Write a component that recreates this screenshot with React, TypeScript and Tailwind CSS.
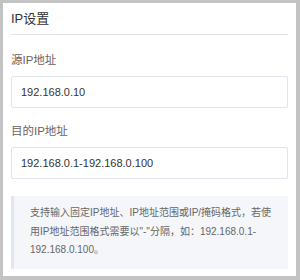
export default function App() {
  return (
    <div className="h-[280px] w-[300px] bg-[#c3c3c3] pt-[3px] pb-[4px] pl-[3px] pr-[4px] font-['Liberation_Sans','Noto_Sans_CJK_SC',sans-serif]">
      <div className="h-full bg-white px-2">
        {/* Header */}
        <div className="flex h-8 items-center border-b border-[#dfe4ec] text-[13px] text-[#333]">
          IP设置
        </div>

        <div className="pt-[17px]">
          <div className="mb-2 text-[11.5px] leading-4 text-[#6b6363]">源IP地址</div>
          <div className="flex h-8 items-center rounded-[2px] border border-[#e1e4ea] px-[9px] text-[11px] text-[#333]">
            192.168.0.10
          </div>

          <div className="mt-[15px] mb-2 text-[11.5px] leading-4 text-[#6b6363]">目的IP地址</div>
          <div className="flex h-8 items-center rounded-[2px] border border-[#e1e4ea] px-[9px] text-[11px] text-[#333]">
            192.168.0.1-192.168.0.100
          </div>

          {/* Tip */}
          <div className="mt-[17px] border-l-[3px] border-[#e2e7ef] bg-[#f4f6fa] pt-2 pb-[9px] pl-4 pr-[10px] text-[10px] leading-[18.5px] text-[#666]">
            支持输入固定IP地址、IP地址范围或IP/掩码格式，若使用IP地址范围格式需要以"-"分隔，如：192.168.0.1-192.168.0.100。
          </div>
        </div>
      </div>
    </div>
  );
}
